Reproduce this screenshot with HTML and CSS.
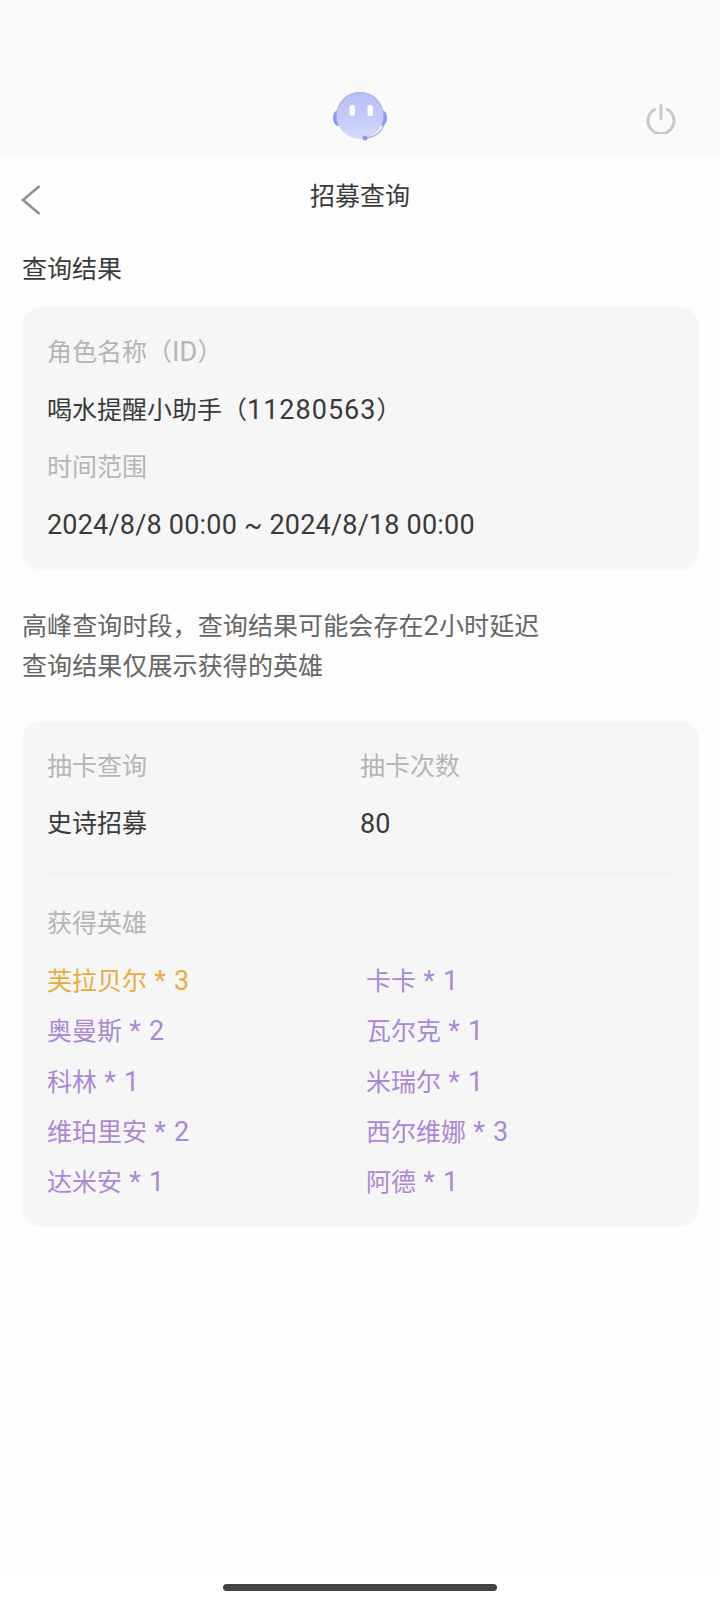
FILE: index.html
```html
<!DOCTYPE html>
<html lang="zh-CN">
<head>
    <meta charset="UTF-8">
    <meta name="viewport" content="width=device-width, initial-scale=1.0">
    <title>招募查询</title>
    <link rel="stylesheet" href="styles.css">
</head>
<body>
    <!-- 顶部客服栏 -->
    <header class="top-bar">
        <svg class="avatar" viewBox="0 0 56 52" aria-hidden="true">
            <defs>
                <linearGradient id="faceFill" x1="0" y1="0" x2="0" y2="1">
                    <stop offset="0" stop-color="#b6c1f5"/>
                    <stop offset="0.55" stop-color="#c3cbf7"/>
                    <stop offset="1" stop-color="#d6dbfa"/>
                </linearGradient>
                <filter id="soft" x="-50%" y="-50%" width="200%" height="200%">
                    <feGaussianBlur stdDeviation="0.7"/>
                </filter>
            </defs>
            <ellipse cx="6.500" cy="27" rx="5.500" ry="8" fill="#8c9cea"/>
            <ellipse cx="49.500" cy="27" rx="5.500" ry="8" fill="#8c9cea"/>
            <circle cx="28" cy="24.500" r="23.500" fill="url(#faceFill)"/>
            <path d="M6 18C9 8 18 1.500 28 1.500C38 1.500 47 8 50 18" fill="none" stroke="#a5b2f0" stroke-width="1.200"/>
            <rect x="17.500" y="14" width="5.500" height="11" rx="2.500" fill="#ffffff" filter="url(#soft)"/>
            <rect x="35.500" y="14" width="5.500" height="11" rx="2.500" fill="#ffffff" filter="url(#soft)"/>
            <path d="M52 34C49 41 43 46 35 47" fill="none" stroke="#a5b2f0" stroke-width="1.400"/>
            <circle cx="33" cy="47" r="2.500" fill="#8c9cea"/>
        </svg>
        <svg class="power" viewBox="0 0 32 32" aria-hidden="true">
            <path d="M9.500 7.500A13 13 0 1 0 22.500 7.500" fill="none" stroke="#c9c9c9" stroke-width="3" stroke-linecap="round"/>
            <path d="M16 3.500V16.500" fill="none" stroke="#c9c9c9" stroke-width="3" stroke-linecap="round"/>
        </svg>
    </header>

    <main class="page">
        <div class="nav-bar">
            <svg class="back" viewBox="0 0 20 30" aria-hidden="true">
                <path d="M18.500 1L2 15L18.500 29" fill="none" stroke="#909090" stroke-width="2.500"/>
            </svg>
            <h1 class="nav-title">招募查询</h1>
        </div>

        <h2 class="section-title">查询结果</h2>

        <section class="card card-info">
            <p class="label">角色名称（<span class="num">ID</span>）</p>
            <p class="value">喝水提醒小助手（<span class="num num-id">11280563</span>）</p>
            <p class="label">时间范围</p>
            <p class="value"><span class="num">2024/8/8 00:00 ~ 2024/8/18 00:00</span></p>
        </section>

        <p class="note">高峰查询时段，查询结果可能会存在<span class="num">2</span>小时延迟<br>查询结果仅展示获得的英雄</p>

        <section class="card card-result">
            <div class="summary">
                <p class="label">抽卡查询</p>
                <p class="label">抽卡次数</p>
                <p class="value">史诗招募</p>
                <p class="value"><span class="num">80</span></p>
            </div>
            <p class="label heroes-label">获得英雄</p>
            <ul class="heroes">
                <li class="gold">芙拉贝尔 <span class="num">* 3</span></li>
                <li>卡卡 <span class="num">* 1</span></li>
                <li>奥曼斯 <span class="num">* 2</span></li>
                <li>瓦尔克 <span class="num">* 1</span></li>
                <li>科林 <span class="num">* 1</span></li>
                <li>米瑞尔 <span class="num">* 1</span></li>
                <li>维珀里安 <span class="num">* 2</span></li>
                <li>西尔维娜 <span class="num">* 3</span></li>
                <li>达米安 <span class="num">* 1</span></li>
                <li>阿德 <span class="num">* 1</span></li>
            </ul>
        </section>
    </main>

    <div class="home-area"><span class="home-bar"></span></div>
</body>
</html>
```

FILE: styles.css
```css
* {
    box-sizing: border-box;
}

body {
    margin: 0;
    height: 1602px;
    display: flex;
    flex-direction: column;
    font-family: Roboto, "Noto Sans CJK SC", sans-serif;
    font-size: 25px;
    color: #3a3a3a;
    background-color: #fdfdfd;
    overflow: hidden;
}

p, h1, h2, ul {
    margin: 0;
    padding: 0;
    font-weight: 400;
}

/* 数字和英文比中文略大 */
.num {
    font-size: 27px;
    letter-spacing: 0.2px;
}

.num-id {
    letter-spacing: 1px;
}

/* 顶部客服栏 */
.top-bar {
    height: 158px;
    flex: none;
    display: flex;
    justify-content: center;
    padding-top: 91px;
    position: relative;
    background-color: #fafafa;
}

.avatar {
    width: 56px;
    height: 52px;
}

.power {
    position: absolute;
    left: 645px;
    top: 102px;
    width: 32px;
    height: 32px;
}

.page {
    flex: 1;
    padding: 0 21px 0 22px;
}

.nav-bar {
    height: 78px;
    display: flex;
    align-items: center;
    justify-content: center;
    position: relative;
}

.back {
    position: absolute;
    left: -1px;
    top: 27px;
    width: 20px;
    height: 30px;
}

.nav-title {
    font-size: 25px;
    line-height: 78px;
    margin-left: -1px;
}

.section-title {
    font-size: 25px;
    line-height: 36px;
    margin-top: 16px;
}

.card {
    background-color: #f6f6f6;
    border-radius: 20px;
    padding: 27px 26px 26px 25px;
}

.card-info {
    height: 263px;
    margin-top: 19px;
}

.label {
    color: #b5b5b5;
    line-height: 36px;
}

.value {
    line-height: 36px;
}

.card-info .value {
    margin: 21px 0;
}

.note {
    color: #666;
    line-height: 40px;
    letter-spacing: 0.1px;
    margin-top: 36px;
}

.card-result {
    height: 506px;
    margin-top: 34px;
    padding-top: 28px;
}

.summary {
    display: grid;
    grid-template-columns: 313px 312px;
    row-gap: 21px;
    padding-bottom: 30px;
    border-bottom: 1px solid #eeeeee;
}

.heroes-label {
    margin-top: 32px;
}

.heroes {
    list-style: none;
    display: grid;
    grid-template-columns: 319px 305px;
    grid-auto-rows: 50.3px;
    margin-top: 14px;
    color: #a988d6;
    line-height: 50px;
    word-spacing: 1px;
}

.heroes .gold {
    color: #e9ab3c;
}

/* 底部手势条 */
.home-area {
    height: 32px;
    flex: none;
    display: flex;
    justify-content: center;
    padding-top: 14px;
    background-color: #fff;
}

.home-bar {
    width: 274px;
    height: 7px;
    border-radius: 4px;
    background-color: #444;
}
```
